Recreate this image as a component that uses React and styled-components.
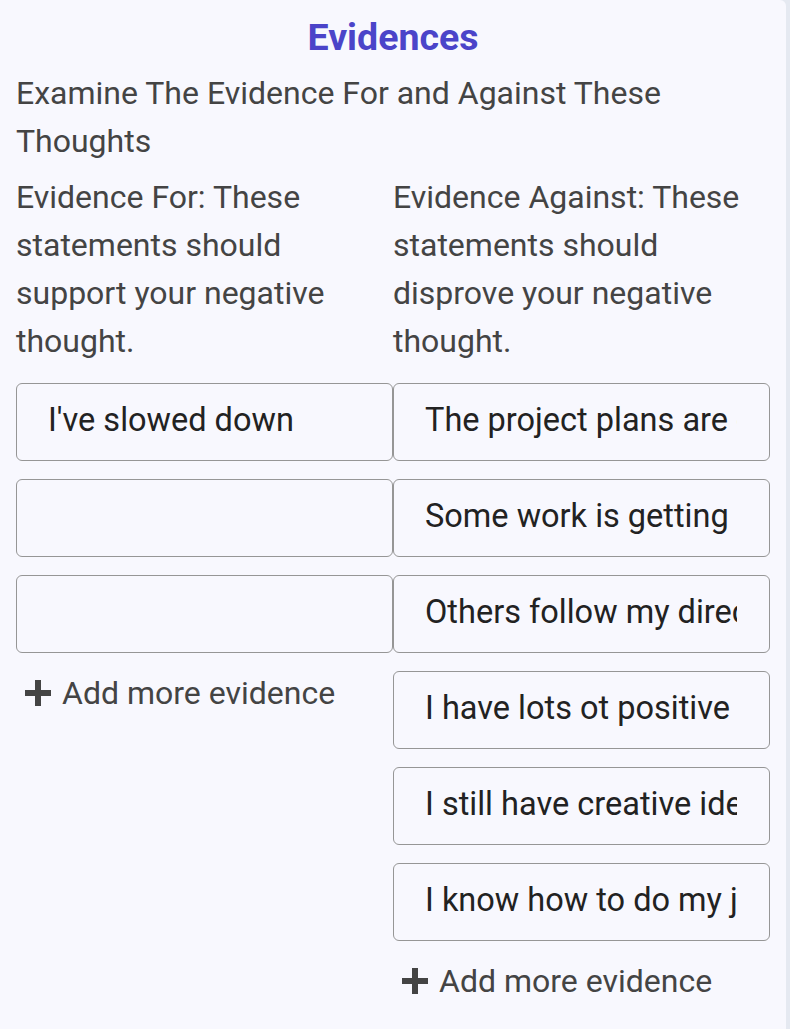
import React from "react";
import styled, { createGlobalStyle } from "styled-components";

const Global = createGlobalStyle`
  html, body { margin: 0; padding: 0; background: #e5e9f1; }
  body { font-family: Roboto, "Liberation Sans", sans-serif; }
  * { box-sizing: border-box; }
`;

const Panel = styled.div`
  width: 786px;
  min-height: 1029px;
  background: #f8f8fe;
  border-top-right-radius: 6px;
  padding: 13px 16px 0 16px;
  display: flex;
  flex-direction: column;
`;

const Title = styled.h2`
  margin: 0;
  text-align: center;
  font-size: 37.5px;
  line-height: 48px;
  font-weight: 700;
  color: #4b44c9;
`;

const Subtitle = styled.p`
  margin: 8px 0 0 0;
  font-size: 32px;
  line-height: 48px;
  color: #444;
`;

const Columns = styled.div`
  display: grid;
  grid-template-columns: 377px 377px;
  margin-top: 8px;
  align-items: start;
`;

const Column = styled.div`
  display: flex;
  flex-direction: column;
  gap: 18px;
`;

const ColumnHead = styled.div`
  font-size: 32px;
  line-height: 48px;
  color: #444;
`;

const InputBox = styled.label`
  display: flex;
  align-items: center;
  width: 100%;
  height: 78px;
  border: 1px solid #969696;
  border-radius: 6px;
  padding: 0 32px 5px 31px;
  overflow: hidden;
`;

const EvidenceInput = styled.input`
  flex: 1;
  min-width: 0;
  height: 40px;
  border: none;
  background: transparent;
  padding: 0;
  font-family: Roboto, "Liberation Sans", sans-serif;
  font-size: 32.5px;
  color: #222;
  outline: none;
`;

const AddButton = styled.button`
  display: flex;
  align-items: center;
  gap: 10px;
  height: 44px;
  padding: 0 0 0 8px;
  border: none;
  background: none;
  font-family: Roboto, "Liberation Sans", sans-serif;
  font-size: 32px;
  color: #444;
  cursor: pointer;
  align-self: flex-start;
`;

const PlusIcon = () => (
  <svg width="28" height="28" viewBox="0 0 28 28" aria-hidden="true">
    <rect x="11" y="1" width="6" height="26" fill="#444" />
    <rect x="1" y="11" width="26" height="6" fill="#444" />
  </svg>
);

const forItems = ["I've slowed down", "", ""];
const againstItems = [
  "The project plans are on track",
  "Some work is getting done",
  "Others follow my direction",
  "I have lots ot positive feedback",
  "I still have creative ideas",
  "I know how to do my job",
];

function EvidenceColumn({ heading, items }) {
  return (
    <Column>
      <ColumnHead>{heading}</ColumnHead>
      {items.map((v, i) => (
        <InputBox key={i}>
          <EvidenceInput defaultValue={v} />
        </InputBox>
      ))}
      <AddButton type="button">
        <PlusIcon />
        Add more evidence
      </AddButton>
    </Column>
  );
}

export default function App() {
  return (
    <>
      <Global />
      <Panel>
        <Title>Evidences</Title>
        <Subtitle>Examine The Evidence For and Against These Thoughts</Subtitle>
        <Columns>
          <EvidenceColumn
            heading="Evidence For: These statements should support your negative thought."
            items={forItems}
          />
          <EvidenceColumn
            heading="Evidence Against: These statements should disprove your negative thought."
            items={againstItems}
          />
        </Columns>
      </Panel>
    </>
  );
}
